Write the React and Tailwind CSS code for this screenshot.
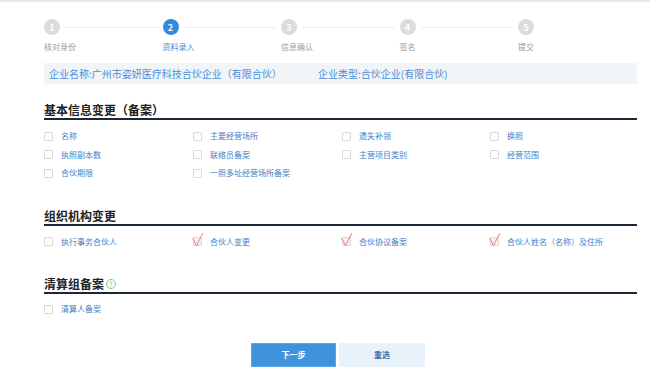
import React from "react"

const steps = ["核对身份", "资料录入", "信息确认", "签名", "提交"]
const activeStep = 1

const basicItems = [
  "名称",
  "主要经营场所",
  "遗失补领",
  "换照",
  "执照副本数",
  "联络员备案",
  "主营项目类别",
  "经营范围",
  "合伙期限",
  "一照多址经营场所备案",
]

const orgItems = [
  { label: "执行事务合伙人", checked: false },
  { label: "合伙人变更", checked: true },
  { label: "合伙协议备案", checked: true },
  { label: "合伙人姓名（名称）及住所", checked: true },
]

const Check = ({ label, checked }) => (
  <div className="flex h-[18.5px] items-center">
    <span
      className={`relative h-[9px] w-[9px] shrink-0 rounded-[1px] border border-[#d9d9d9] ${
        checked ? "bg-[#f3f3f3]" : "bg-white"
      }`}
    >
      {checked && (
        <svg
          className="absolute left-[-3px] top-[-7px]"
          width="14"
          height="16"
          viewBox="0 0 14 16"
          fill="none"
        >
          <path d="M1.5 7 L5.5 14.5 L12 2" stroke="#ef6a6a" strokeWidth="0.9" />
        </svg>
      )}
    </span>
    <span className="ml-[8px] whitespace-nowrap text-[8px] leading-none text-[#4282c8]">{label}</span>
  </div>
)

const Heading = ({ children }) => (
  <div className="flex items-center border-b-2 border-[#1b2838] pb-[1px] text-[12px] font-bold leading-[14px] text-[#222]">
    {children}
  </div>
)

const App = () => {
  return (
    <main
      className="min-h-[377px] w-[650px] bg-white"
      style={{ fontFamily: '"Noto Sans CJK SC", "Noto Sans", sans-serif' }}
    >
      <div className="h-[2px] bg-[#e8e8e8]" />

      <div className="ml-[44px] w-[593px]">
        <div className="mt-[17px] flex">
          {steps.map((step, i) => {
            const active = i === activeStep
            return (
              <div key={step} className="w-[118.5px] shrink-0">
                <div className="flex items-center">
                  <span
                    className={`flex h-[16px] w-[16px] shrink-0 items-center justify-center rounded-full text-[9px] font-bold leading-none text-white ${
                      active ? "bg-[#2f8ae0]" : "bg-[#dcdcdc]"
                    }`}
                  >
                    {i + 1}
                  </span>
                  {i < steps.length - 1 && <span className="mx-[5px] h-px flex-1 bg-[#eeeeee]" />}
                </div>
                <div
                  className={`mt-[7px] text-[8px] leading-[10px] ${active ? "text-[#3a8ee0]" : "text-[#9a9a9a]"}`}
                >
                  {step}
                </div>
              </div>
            )
          })}
        </div>

        <div className="mt-[11px] flex h-[21px] items-center bg-[#f2f5f8] text-[10px] text-[#4a8fd8]">
          <span className="ml-[5px] w-[269px] whitespace-nowrap">企业名称:广州市姿妍医疗科技合伙企业（有限合伙）</span>
          <span className="whitespace-nowrap">企业类型:合伙企业(有限合伙)</span>
        </div>

        <div className="mt-[19px]">
          <Heading>基本信息变更（备案）</Heading>
        </div>
        <div className="mt-[7px] grid grid-cols-[149px_149px_148px_1fr]">
          {basicItems.map((item) => (
            <Check key={item} label={item} />
          ))}
        </div>

        <div className="mt-[26px]">
          <Heading>组织机构变更</Heading>
        </div>
        <div className="mt-[7px] grid grid-cols-[149px_149px_148px_1fr]">
          {orgItems.map((item) => (
            <Check key={item.label} label={item.label} checked={item.checked} />
          ))}
        </div>

        <div className="mt-[26px]">
          <Heading>
            清算组备案
            <span className="ml-[2px] flex h-[10px] w-[10px] items-center justify-center rounded-full border border-[#7ccf7c] text-[7px] font-normal leading-none text-[#6cc66c]">
              ?
            </span>
          </Heading>
        </div>
        <div className="mt-[6px] grid grid-cols-[149px_149px_148px_1fr]">
          <Check label="清算人备案" />
        </div>

        <div className="mt-[24px] flex gap-[3px] pl-[207px]">
          <button className="flex h-[24px] w-[85px] items-center justify-center border border-[#5aa7e6] bg-[#3f93dc] text-[8px] font-bold text-white">
            下一步
          </button>
          <button className="flex h-[24px] w-[86px] items-center justify-center bg-[#e9f2fb] text-[8px] font-bold text-[#3b6ea8]">
            重选
          </button>
        </div>
      </div>
    </main>
  )
}

export default App
